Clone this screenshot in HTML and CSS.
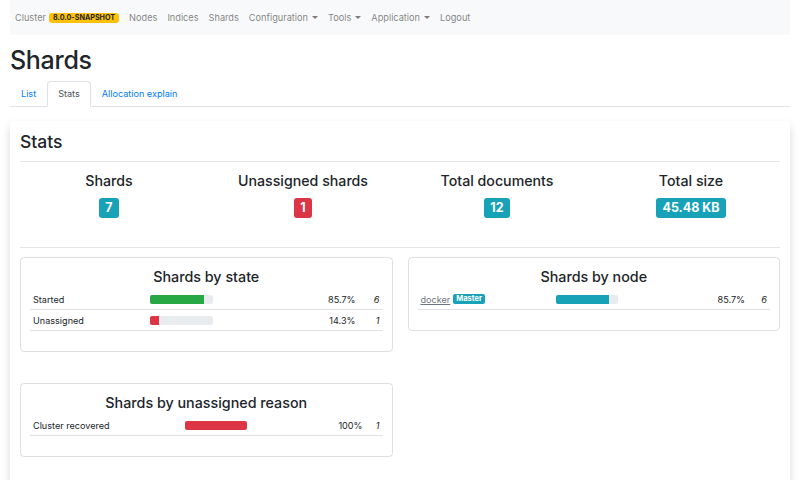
FILE: index.html
```html
<!DOCTYPE html>
<html>
<head>
<meta charset="utf-8">
<link rel="stylesheet" href="styles.css">
</head>
<body>
<div class="container">
  <nav class="navbar">
    <span class="nav-item">Cluster <span class="badge badge-warning">8.0.0-SNAPSHOT</span></span>
    <span class="nav-item">Nodes</span>
    <span class="nav-item">Indices</span>
    <span class="nav-item">Shards</span>
    <span class="nav-item dropdown">Configuration</span>
    <span class="nav-item dropdown">Tools</span>
    <span class="nav-item dropdown">Application</span>
    <span class="nav-item">Logout</span>
  </nav>

  <h1 class="page-title">Shards</h1>

  <ul class="tabs">
    <li class="tab">List</li>
    <li class="tab active">Stats</li>
    <li class="tab">Allocation explain</li>
  </ul>

  <div class="card main-card">
    <h2 class="card-title">Stats</h2>
    <hr class="divider">
    <div class="stats-row">
      <div class="stat">
        <div class="stat-title">Shards</div>
        <span class="badge badge-big badge-info">7</span>
      </div>
      <div class="stat">
        <div class="stat-title">Unassigned shards</div>
        <span class="badge badge-big badge-danger">1</span>
      </div>
      <div class="stat">
        <div class="stat-title">Total documents</div>
        <span class="badge badge-big badge-info">12</span>
      </div>
      <div class="stat">
        <div class="stat-title">Total size</div>
        <span class="badge badge-big badge-info">45.48 KB</span>
      </div>
    </div>
    <hr class="divider">

    <div class="panels">
      <div class="panel">
        <div class="panel-title">Shards by state</div>
        <div class="tbl tbl-state">
          <div class="tr">
            <span class="td name">Started</span>
            <span class="td"><span class="progress"><span class="bar bar-success" style="width:85.7%"></span></span></span>
            <span class="td pct">85.7%</span>
            <span class="td count">6</span>
          </div>
          <div class="tr">
            <span class="td name">Unassigned</span>
            <span class="td"><span class="progress"><span class="bar bar-danger" style="width:14.3%"></span></span></span>
            <span class="td pct">14.3%</span>
            <span class="td count">1</span>
          </div>
        </div>
      </div>

      <div class="panel">
        <div class="panel-title">Shards by node</div>
        <div class="tbl tbl-node">
          <div class="tr">
            <span class="td name"><span class="node-link">docker</span> <span class="badge badge-small badge-info">Master</span></span>
            <span class="td"><span class="progress"><span class="bar bar-info" style="width:85.7%"></span></span></span>
            <span class="td pct">85.7%</span>
            <span class="td count">6</span>
          </div>
        </div>
      </div>

      <div class="panel">
        <div class="panel-title">Shards by unassigned reason</div>
        <div class="tbl tbl-reason">
          <div class="tr">
            <span class="td name">Cluster recovered</span>
            <span class="td"><span class="progress"><span class="bar bar-danger" style="width:100%"></span></span></span>
            <span class="td pct">100%</span>
            <span class="td count">1</span>
          </div>
        </div>
      </div>
    </div>
  </div>
</div>
</body>
</html>
```
FILE: styles.css
```css
* { box-sizing: border-box; }
html, body { margin: 0; padding: 0; background: #fff; }
body {
  font-family: Inter, "Noto Sans", "Liberation Sans", sans-serif;
  color: #212529;
  overflow: hidden;
}
.container { padding: 0 10px; }

.navbar {
  background: #f8f9fa;
  height: 35px;
  display: flex;
  align-items: center;
  gap: 10px;
  padding-left: 5px;
  font-size: 9.2px;
  color: rgba(0,0,0,.5);
}
.nav-item { white-space: nowrap; display: inline-flex; align-items: center; }
.dropdown::after {
  content: "";
  display: inline-block;
  margin-left: 4px;
  border-top: 3.5px solid rgba(0,0,0,.5);
  border-left: 3px solid transparent;
  border-right: 3px solid transparent;
}

.badge {
  display: inline-block;
  font-weight: 700;
  border-radius: 3px;
  text-align: center;
  white-space: nowrap;
}
.badge-warning {
  background: #ffc107;
  color: #212529;
  font-size: 7.2px;
  line-height: 10px;
  padding: 0 4px;
  margin-left: 3px;
}
.badge-info { background: #17a2b8; color: #fff; }
.badge-danger { background: #dc3545; color: #fff; }
.badge-big {
  font-size: 12.5px;
  line-height: 14px;
  padding: 3px 6px;
}
.badge-small {
  font-size: 7.5px;
  line-height: 10px;
  padding: 0 3px;
  border-radius: 2px;
}

.page-title {
  font-size: 25px;
  letter-spacing: -0.3px;
  font-weight: 500;
  line-height: 32px;
  margin: 9px 0 5px;
}

.tabs {
  list-style: none;
  margin: 0;
  padding: 0;
  display: flex;
  border-bottom: 1px solid #dee2e6;
  font-size: 9.1px;
}
.tab {
  color: #007bff;
  padding: 5px 10px;
  line-height: 14px;
  border: 1px solid transparent;
  border-top-left-radius: 4px;
  border-top-right-radius: 4px;
  margin-bottom: -1px;
}
.tab.active {
  color: #495057;
  background: #fff;
  border-color: #dee2e6 #dee2e6 #fff;
}

.card { background: #fff; border-radius: 4px; }
.main-card {
  margin-top: 14px;
  padding: 10px 10px 40px;
  box-shadow: 0 5px 10px rgba(0,0,0,.15);
  min-height: 400px;
}
.card-title {
  font-size: 17.5px;
  font-weight: 500;
  line-height: 21px;
  margin: 0;
}
.divider {
  border: 0;
  border-top: 1px solid rgba(0,0,0,.1);
  margin: 9px 0 0;
}

.stats-row {
  display: grid;
  grid-template-columns: repeat(4, 1fr);
  margin: 0 -8px;
  padding: 10px 0 20px;
}
.stat { text-align: center; }
.stat-title {
  font-size: 14.2px;
  font-weight: 500;
  line-height: 18px;
  margin-bottom: 6px;
}

.panels {
  display: grid;
  grid-template-columns: 1fr 1fr;
  column-gap: 15px;
  row-gap: 31px;
  align-items: start;
  margin-top: 9px;
}
.panel {
  border: 1px solid rgba(0,0,0,.125);
  border-radius: 4px;
  padding: 10px 9px 20px;
}
.panel-title {
  text-align: center;
  font-size: 14.3px;
  font-weight: 500;
  line-height: 18px;
  margin-bottom: 3px;
}

.tbl { font-size: 9.1px; }
.tr {
  display: grid;
  height: 21px;
  align-items: center;
  border-bottom: 1px solid #dee2e6;
}
.tbl-state .tr { grid-template-columns: 120px 63px 1fr 24px; }
.tbl-node .tr { grid-template-columns: 138px 62px 1fr 22px; }
.tbl-reason .tr { grid-template-columns: 155px 62px 1fr 17px; }
.td { white-space: nowrap; }
.name { padding-left: 3px; display: flex; align-items: center; }
.pct { text-align: right; padding-right: 3px; }
.count { text-align: right; padding-right: 3px; font-style: italic; }
.node-link { color: #6c757d; text-decoration: underline; margin-right: 3px; }

.progress {
  display: block;
  height: 9px;
  background: #e9ecef;
  border-radius: 2px;
  overflow: hidden;
}
.bar { display: block; height: 100%; }
.bar-success { background: #28a745; }
.bar-danger { background: #dc3545; }
.bar-info { background: #17a2b8; }
```
